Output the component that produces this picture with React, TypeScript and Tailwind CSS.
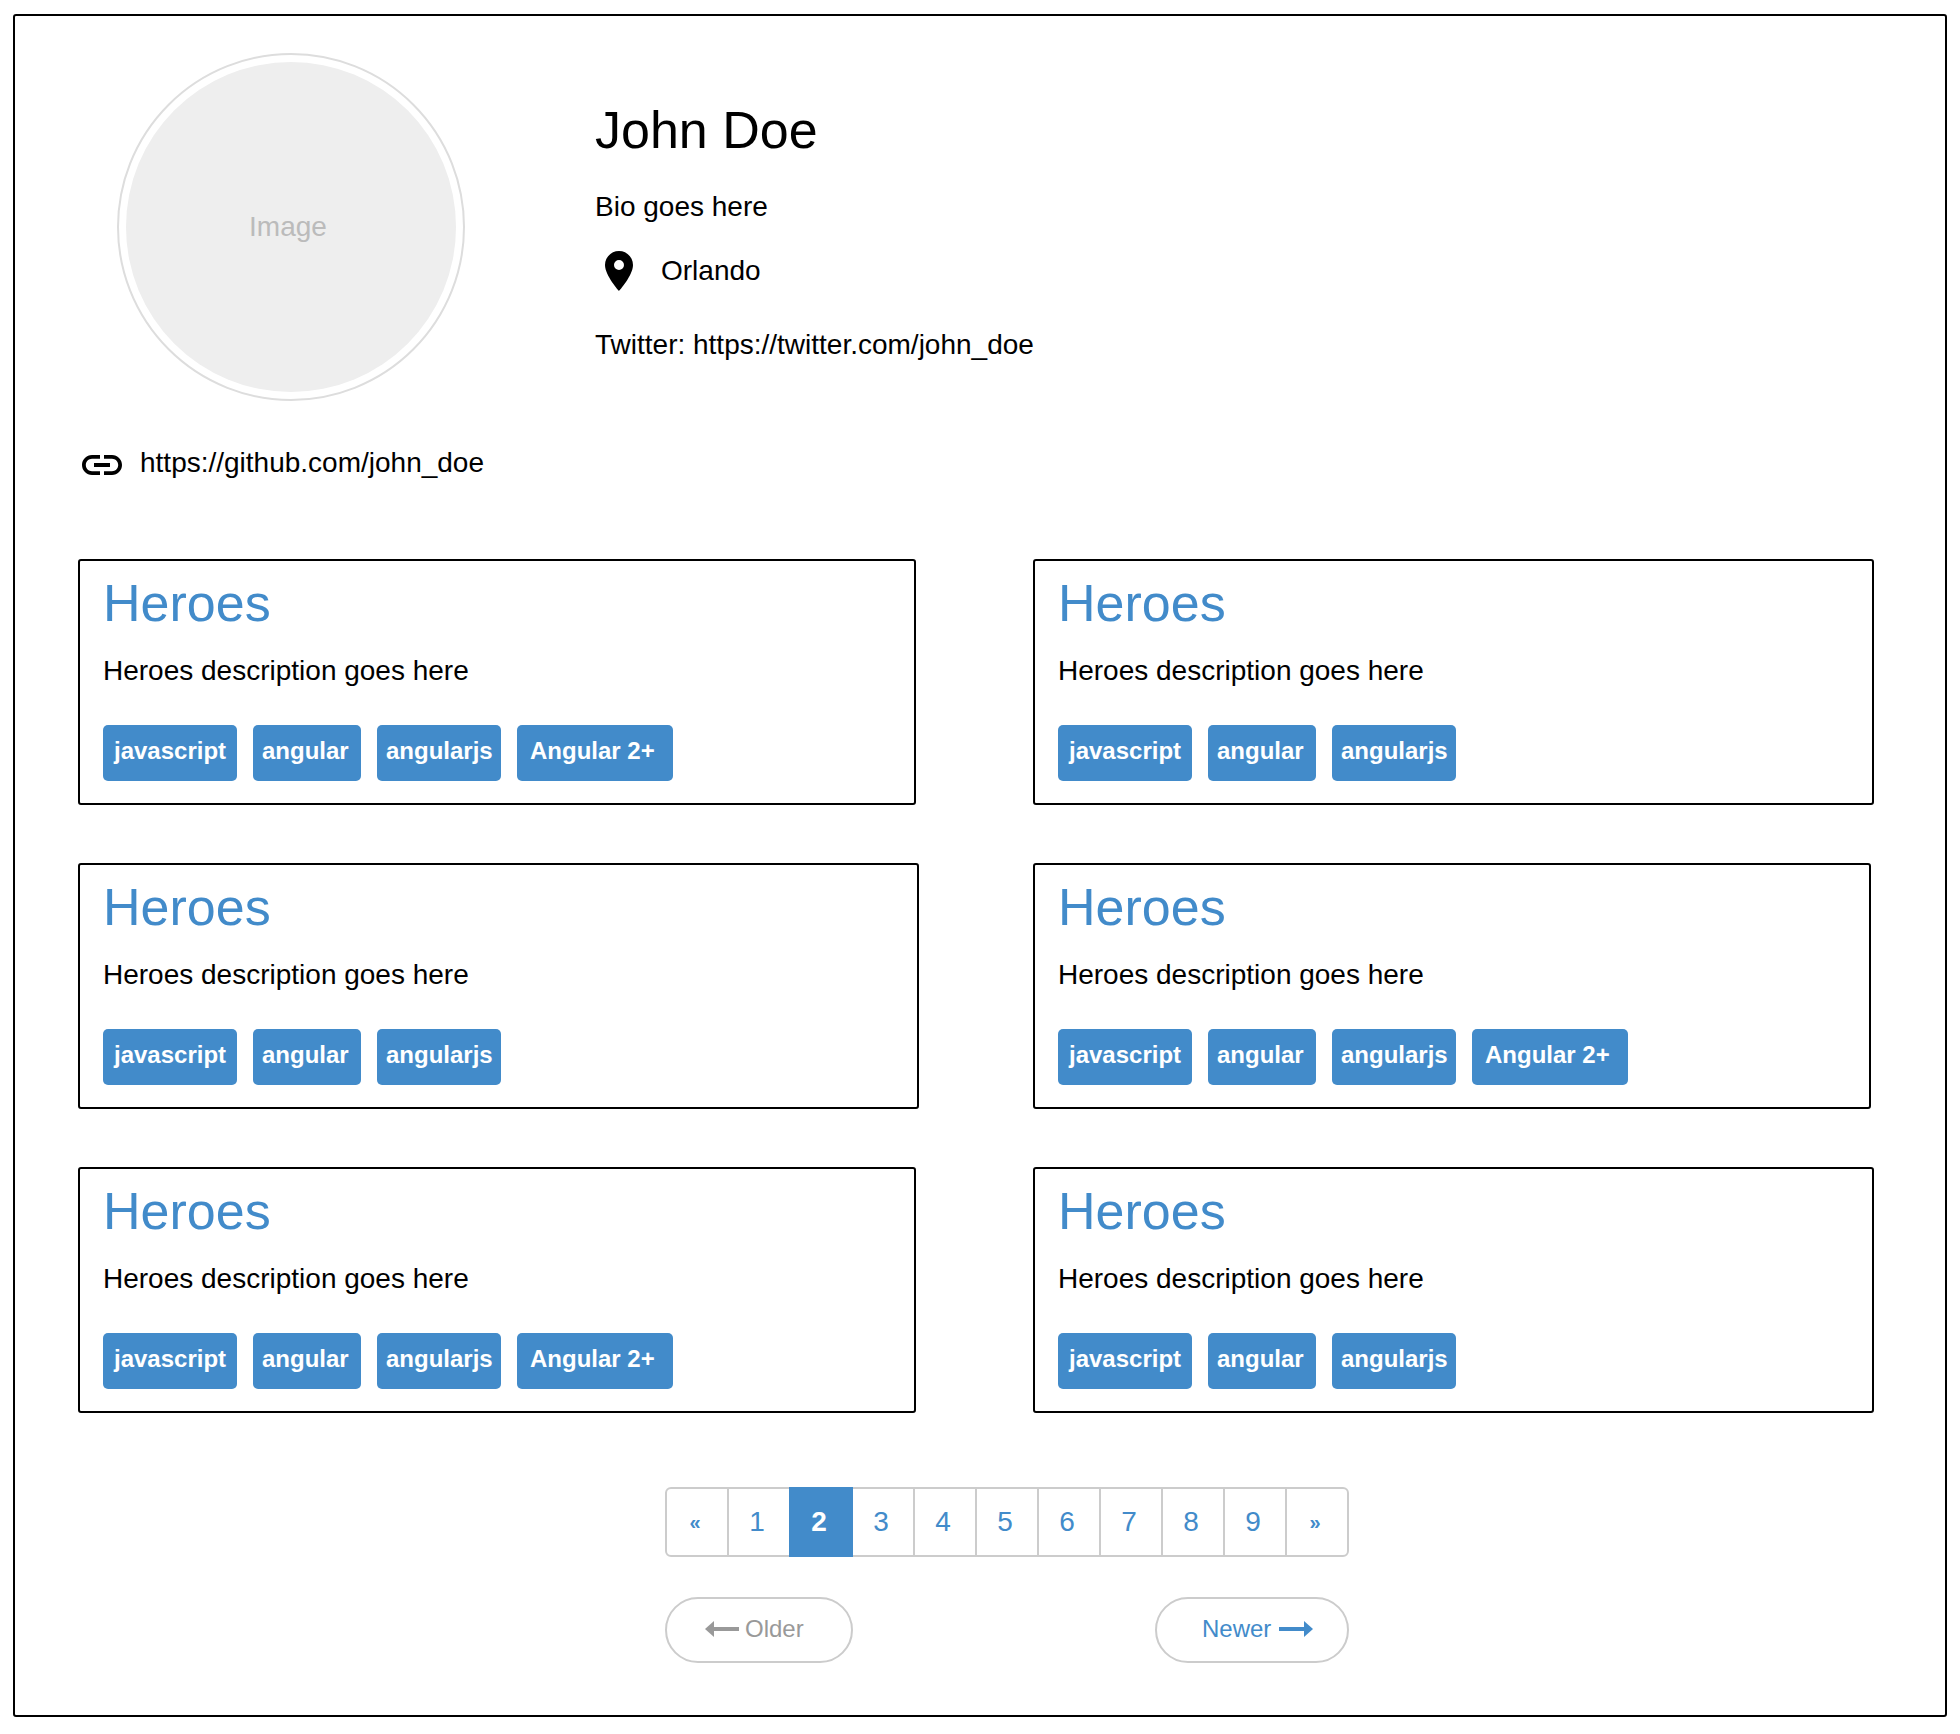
import React from "react";
import { MdLink, MdPlace } from "react-icons/md";

type Tag = { label: string; box: string };

const javascript: Tag = { label: "javascript", box: "w-[134px] pl-[11px]" };
const angular: Tag = { label: "angular", box: "w-[108px] pl-[9px]" };
const angularjs: Tag = { label: "angularjs", box: "w-[124px] pl-[9px]" };
const angular2: Tag = { label: "Angular 2+", box: "w-[156px] pl-[13px]" };

const short: Tag[] = [javascript, angular, angularjs];
const full: Tag[] = [...short, angular2];
const projects: Tag[][] = [full, short, short, full, full, short];

const pages = ["«", "1", "2", "3", "4", "5", "6", "7", "8", "9", "»"];
const current = "2";

function ProjectCard({ tags }: { tags: Tag[] }) {
  return (
    <article
      className={
        tags.length > 3
          ? "mr-[3px] rounded-[3px] border-2 border-black px-[23px] pt-3 pb-[22px]"
          : "rounded-[3px] border-2 border-black px-[23px] pt-3 pb-[22px]"
      }
    >
      <h2 className="text-[52px] leading-[60px] text-[#428bca]">
        <a href="#heroes">Heroes</a>
      </h2>
      <p className="mt-5 leading-9">Heroes description goes here</p>
      <ul className="mt-9 flex gap-4">
        {tags.map((tag) => (
          <li
            key={tag.label}
            className={`flex h-14 items-center rounded-[5px] bg-[#428bca] pb-1 text-2xl font-bold text-white ${tag.box}`}
          >
            {tag.label}
          </li>
        ))}
      </ul>
    </article>
  );
}

function Pagination() {
  return (
    <nav aria-label="Pages">
      <ul className="flex">
        {pages.map((page) => (
          <li key={page} className="group -ml-0.5 first:ml-0">
            <button
              type="button"
              aria-current={page === current ? "page" : undefined}
              className={
                page === current
                  ? "relative h-[70px] w-16 border-2 border-[#428bca] bg-[#428bca] pr-1 font-bold text-white"
                  : "h-[70px] w-16 border-2 border-[#ccc] pr-1 text-[#428bca] group-first:rounded-l-md group-first:text-xl group-first:font-bold group-last:rounded-r-md group-last:text-xl group-last:font-bold"
              }
            >
              {page}
            </button>
          </li>
        ))}
      </ul>
    </nav>
  );
}

export default function App() {
  return (
    <div className="bg-white pt-3.5 pr-[13px] pb-4 pl-[13px] font-['Liberation_Sans',Arial,sans-serif] text-[28px] leading-9 text-black">
      <main className="rounded-[3px] border-2 border-black pt-[37px] pr-[71px] pb-[52px] pl-[63px]">
        <header>
          <div className="flex gap-[130px] pl-[39px]">
            <div className="size-[348px] shrink-0 rounded-full border-2 border-[#ddd] p-[7px]">
              <div className="flex size-full items-center justify-center rounded-full bg-[#eee] pr-1.5 text-[#bbb]">
                Image
              </div>
            </div>
            <div className="pt-[47px]">
              <h1 className="text-[52px] leading-[60px]">John Doe</h1>
              <p className="mt-[29px]">Bio goes here</p>
              <p className="mt-[22px] flex items-center gap-[18px]">
                <MdPlace className="size-12" />
                Orlando
              </p>
              <p className="mt-8">
                Twitter: <a href="https://twitter.com/john_doe">https://twitter.com/john_doe</a>
              </p>
            </div>
          </div>
          <p className="mt-10 flex items-center gap-3.5">
            <MdLink className="size-12" />
            <a href="https://github.com/john_doe" className="pb-1">
              https://github.com/john_doe
            </a>
          </p>
        </header>

        <section className="mt-[70px] grid grid-cols-2 gap-x-[114px] gap-y-[58px]">
          {projects.map((tags, index) => (
            <ProjectCard key={index} tags={tags} />
          ))}
        </section>

        <footer className="mt-[74px] flex justify-center pl-[62px]">
          <div>
            <Pagination />
            <div className="mt-10 flex justify-between text-2xl">
              <button
                type="button"
                className="flex h-[66px] w-[188px] items-center gap-1.5 rounded-full border-2 border-[#ccc] pb-0.5 pl-[38px] text-[#999]"
              >
                <svg viewBox="0 0 34 16" className="h-4 w-[34px]" fill="currentColor" aria-hidden="true">
                  <path d="M0 8L9 0V6H34V10H9V16Z" />
                </svg>
                Older
              </button>
              <button
                type="button"
                className="flex h-[66px] w-[194px] items-center gap-2 rounded-full border-2 border-[#ccc] pb-0.5 pl-[45px] text-[#428bca]"
              >
                Newer
                <svg viewBox="0 0 34 16" className="h-4 w-[34px]" fill="currentColor" aria-hidden="true">
                  <path d="M34 8L25 0V6H0V10H25V16Z" />
                </svg>
              </button>
            </div>
          </div>
        </footer>
      </main>
    </div>
  );
}
